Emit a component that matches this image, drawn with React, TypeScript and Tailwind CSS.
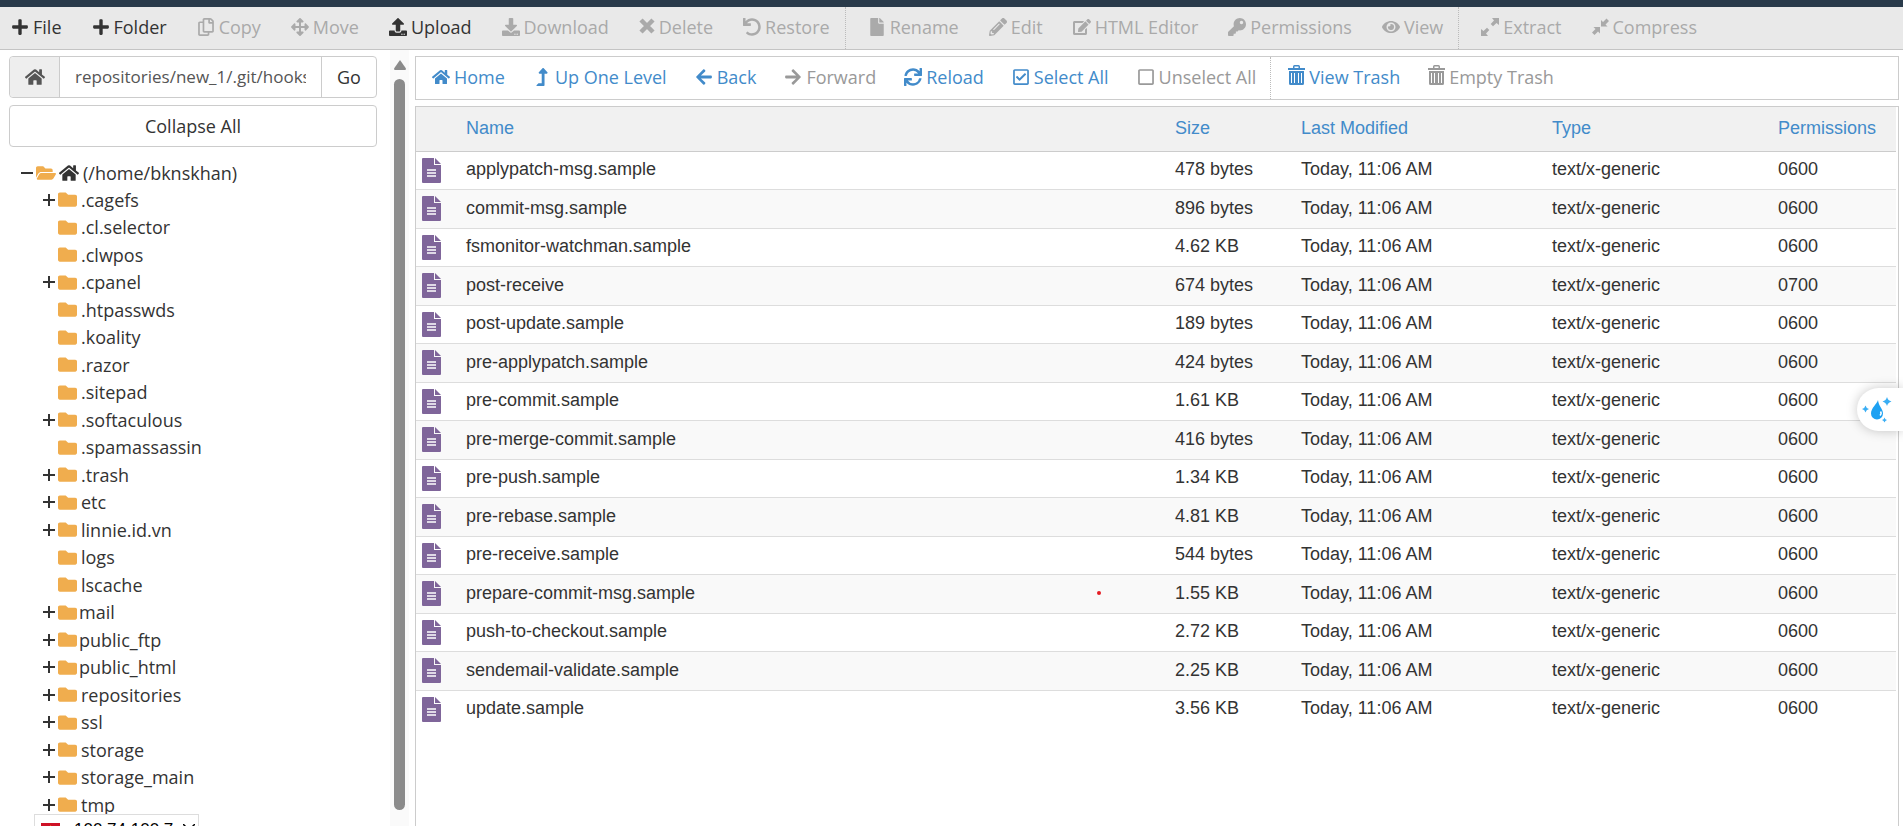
import React, { useState } from 'react';
import type { IconType } from 'react-icons';
import {
  FaArrowLeft,
  FaArrowRight,
  FaArrowsAlt,
  FaDownload,
  FaEdit,
  FaEye,
  FaFile,
  FaFolder,
  FaFolderOpen,
  FaHome,
  FaKey,
  FaLevelUpAlt,
  FaPencilAlt,
  FaPlus,
  FaRegCheckSquare,
  FaRegCopy,
  FaRegSquare,
  FaSync,
  FaUndo,
  FaUpload,
} from 'react-icons/fa';

type IconProps = { className?: string };

interface ToolItem {
  label: string;
  icon: IconType | React.FC<IconProps>;
  disabled?: boolean;
  divider?: boolean;
}

interface TreeNode {
  name: string;
  expandable?: boolean;
  tight?: boolean;
}

interface FileRow {
  name: string;
  size: string;
  perms: string;
}

const TrashIcon: React.FC<IconProps> = () => (
  <svg viewBox="0 0 17 20" className="mb-1 h-5 w-[17px] shrink-0" fill="currentColor">
    <path d="M5 3V1.500A1.500 1.500 0 0 1 6.500 0h4A1.500 1.500 0 0 1 12 1.500V3h5v2H0V3zM6.500 3h4V1.500h-4z" fillRule="evenodd" />
    <path
      d="M1 6h15v12.500a1.500 1.500 0 0 1-1.500 1.500h-12A1.500 1.500 0 0 1 1 18.500zM3 8v10h1V8zM6 8v10h1V8zM10 8v10h1V8zM13 8v10h1V8z"
      fillRule="evenodd"
    />
  </svg>
);

const DeleteIcon: React.FC<IconProps> = ({ className }) => (
  <svg viewBox="0 0 16 18" className={className} fill="none" stroke="currentColor" strokeWidth="4.500">
    <path d="M2 2l12 12M14 2L2 14" />
  </svg>
);

const ExtractIcon: React.FC<IconProps> = ({ className }) => (
  <svg viewBox="0 0 18 18" className={className} fill="currentColor">
    <path d="M11 0h7v7l-2.500-2L12 8.300 9.700 6 13 2.500z" />
    <path d="M7 18H0v-7l2.500 2L6 9.700 8.300 12 5 15.500z" />
  </svg>
);

const CompressIcon: React.FC<IconProps> = ({ className }) => (
  <svg viewBox="0 0 17 18" className={className} fill="currentColor">
    <path d="M9 2v6.500h6.500l-2-2L17 3 14.500.500 11 4z" />
    <path d="M8 15.500V9H1.500l2 2L0 14.500 2.500 17 6 13.500z" />
  </svg>
);

const FileIcon: React.FC<IconProps> = ({ className }) => (
  <svg viewBox="0 0 19 25" className={className}>
    <path d="M1 0h11v7h7v17a1 1 0 0 1-1 1H1a1 1 0 0 1-1-1V1a1 1 0 0 1 1-1z" fill="#7f659a" />
    <path d="M13 0l6 6h-6z" fill="#7f659a" />
    <path d="M5 12h9M5 15h9M5 18h9" stroke="#fff" strokeWidth="1.300" />
  </svg>
);

const toolbar: ToolItem[] = [
  { label: 'File', icon: FaPlus },
  { label: 'Folder', icon: FaPlus },
  { label: 'Copy', icon: FaRegCopy, disabled: true },
  { label: 'Move', icon: FaArrowsAlt, disabled: true },
  { label: 'Upload', icon: FaUpload },
  { label: 'Download', icon: FaDownload, disabled: true },
  { label: 'Delete', icon: DeleteIcon, disabled: true },
  { label: 'Restore', icon: FaUndo, disabled: true },
  { label: 'Rename', icon: FaFile, disabled: true, divider: true },
  { label: 'Edit', icon: FaPencilAlt, disabled: true },
  { label: 'HTML Editor', icon: FaEdit, disabled: true },
  { label: 'Permissions', icon: FaKey, disabled: true },
  { label: 'View', icon: FaEye, disabled: true },
  { label: 'Extract', icon: ExtractIcon, disabled: true, divider: true },
  { label: 'Compress', icon: CompressIcon, disabled: true },
];

const navItems: ToolItem[] = [
  { label: 'Home', icon: FaHome },
  { label: 'Up One Level', icon: FaLevelUpAlt },
  { label: 'Back', icon: FaArrowLeft },
  { label: 'Forward', icon: FaArrowRight, disabled: true },
  { label: 'Reload', icon: FaSync },
  { label: 'Select All', icon: FaRegCheckSquare },
  { label: 'Unselect All', icon: FaRegSquare, disabled: true },
  { label: 'View Trash', icon: TrashIcon, divider: true },
  { label: 'Empty Trash', icon: TrashIcon, disabled: true },
];

const tree: TreeNode[] = [
  { name: '.cagefs', expandable: true },
  { name: '.cl.selector' },
  { name: '.clwpos' },
  { name: '.cpanel', expandable: true },
  { name: '.htpasswds' },
  { name: '.koality' },
  { name: '.razor' },
  { name: '.sitepad' },
  { name: '.softaculous', expandable: true },
  { name: '.spamassassin' },
  { name: '.trash', expandable: true },
  { name: 'etc', expandable: true },
  { name: 'linnie.id.vn', expandable: true },
  { name: 'logs' },
  { name: 'lscache' },
  { name: 'mail', expandable: true, tight: true },
  { name: 'public_ftp', expandable: true, tight: true },
  { name: 'public_html', expandable: true, tight: true },
  { name: 'repositories', expandable: true },
  { name: 'ssl', expandable: true },
  { name: 'storage', expandable: true },
  { name: 'storage_main', expandable: true },
  { name: 'tmp', expandable: true },
];

const files: FileRow[] = [
  { name: 'applypatch-msg.sample', size: '478 bytes', perms: '0600' },
  { name: 'commit-msg.sample', size: '896 bytes', perms: '0600' },
  { name: 'fsmonitor-watchman.sample', size: '4.62 KB', perms: '0600' },
  { name: 'post-receive', size: '674 bytes', perms: '0700' },
  { name: 'post-update.sample', size: '189 bytes', perms: '0600' },
  { name: 'pre-applypatch.sample', size: '424 bytes', perms: '0600' },
  { name: 'pre-commit.sample', size: '1.61 KB', perms: '0600' },
  { name: 'pre-merge-commit.sample', size: '416 bytes', perms: '0600' },
  { name: 'pre-push.sample', size: '1.34 KB', perms: '0600' },
  { name: 'pre-rebase.sample', size: '4.81 KB', perms: '0600' },
  { name: 'pre-receive.sample', size: '544 bytes', perms: '0600' },
  { name: 'prepare-commit-msg.sample', size: '1.55 KB', perms: '0600' },
  { name: 'push-to-checkout.sample', size: '2.72 KB', perms: '0600' },
  { name: 'sendemail-validate.sample', size: '2.25 KB', perms: '0600' },
  { name: 'update.sample', size: '3.56 KB', perms: '0600' },
];

const Toolbar: React.FC = () => (
  <div className="flex h-[43px] shrink-0 border-b border-[#c4c4c4] bg-[#e9e9e9] pr-4">
    {toolbar.map(({ label, icon: Icon, disabled, divider }) => (
      <button
        key={label}
        type="button"
        disabled={disabled}
        className={`flex items-center gap-1 whitespace-nowrap pb-[2px] first:pl-[11px] ${
          divider ? 'border-l border-dotted border-[#bbb] pl-[22px] pr-[15px]' : 'px-[15px]'
        } ${disabled ? 'text-[#aaa]' : 'text-[#333]'}`}
      >
        <Icon className="h-[18px] w-auto shrink-0" />
        {label}
      </button>
    ))}
  </div>
);

const NavBar: React.FC = () => (
  <nav className="flex h-11 shrink-0 border border-[#ccc] bg-white">
    {navItems.map(({ label, icon: Icon, disabled, divider }) => (
      <button
        key={label}
        type="button"
        disabled={disabled}
        className={`flex items-center gap-1 whitespace-nowrap pb-[2px] first:pl-4 ${
          divider ? 'border-l border-dotted border-[#bbb] pl-[17px] pr-[14px]' : 'px-[14px]'
        } ${disabled ? 'text-[#999]' : 'text-[#428bca]'}`}
      >
        <Icon className="h-[18px] w-auto shrink-0" />
        {label}
      </button>
    ))}
  </nav>
);

const Sidebar: React.FC = () => {
  const [path, setPath] = useState('repositories/new_1/.git/hooks');

  return (
    <aside className="w-[377px] shrink-0 pl-[9px] pt-[6px]">
      <form className="flex h-[42px] rounded border border-[#ccc]" onSubmit={(e) => e.preventDefault()}>
        <label htmlFor="path" aria-label="Path" className="flex w-[49px] items-center justify-center rounded-l bg-[#eee] text-[#555]">
          <FaHome className="size-5" />
        </label>
        <input
          id="path"
          value={path}
          onChange={(e) => setPath(e.target.value)}
          className="min-w-0 flex-1 border-x border-[#ccc] px-[15px] text-[17px] text-[#555] outline-none"
        />
        <button type="submit" className="w-[54px] text-[#333]">
          Go
        </button>
      </form>
      <button type="button" className="mt-[7px] h-[42px] w-full rounded-sm border border-[#ccc] text-[#333]">
        Collapse All
      </button>

      <ul className="mt-3">
        <li className="flex h-[27px] items-center pl-3">
          <span className="h-[2px] w-3 bg-[#333]" />
          <FaFolderOpen className="ml-[3px] size-5 text-[#f0ad4e]" />
          <FaHome className="ml-[3px] size-5" />
          <span className="ml-1">(/home/bknskhan)</span>
        </li>
        {tree.map((node) => (
          <li key={node.name} className="flex h-[27px] items-center pl-[34px] odd:h-7">
            <span className="flex w-[15px] shrink-0">
              {node.expandable && (
                <svg viewBox="0 0 12 12" className="size-3" stroke="#333" strokeWidth="2">
                  <path d="M0 6h12M6 0v12" />
                </svg>
              )}
            </span>
            <FaFolder className="size-[19px] shrink-0 text-[#f0ad4e]" />
            <span className={node.tight ? 'ml-[2px]' : 'ml-1'}>{node.name}</span>
          </li>
        ))}
      </ul>
    </aside>
  );
};

const FileTable: React.FC = () => (
  <div className="mt-[6px] flex-1 border border-b-0 border-[#ccc] pr-[2px] font-['Liberation_Sans',Arial,sans-serif]">
    <table className="w-full table-fixed border-collapse text-left">
      <colgroup>
        <col className="w-10" />
        <col />
        <col className="w-[126px]" />
        <col className="w-[251px]" />
        <col className="w-[226px]" />
        <col className="w-[128px]" />
      </colgroup>
      <thead>
        <tr className="h-11 border-b border-[#ccc] bg-[#f1f1f1] text-[#428bca]">
          <th aria-label="Icon" />
          <th className="px-[10px] pb-[2px] font-normal">Name</th>
          <th className="px-[10px] pb-[2px] font-normal">Size</th>
          <th className="px-[10px] pb-[2px] font-normal">Last Modified</th>
          <th className="px-[10px] pb-[2px] font-normal">Type</th>
          <th className="px-[10px] pb-[2px] font-normal">Permissions</th>
        </tr>
      </thead>
      <tbody>
        {files.map((file) => (
          <tr key={file.name} className="h-[38px] border-b border-[#ddd] last:border-b-0 even:h-[39px] even:bg-[#f9f9f9]">
            <td className="pl-[6px]">
              <FileIcon className="h-[25px] w-[19px]" />
            </td>
            <td className="px-[10px] pb-[2px]">{file.name}</td>
            <td className="px-[10px] pb-[2px]">{file.size}</td>
            <td className="px-[10px] pb-[2px]">Today, 11:06 AM</td>
            <td className="px-[10px] pb-[2px]">text/x-generic</td>
            <td className="px-[10px] pb-[2px]">{file.perms}</td>
          </tr>
        ))}
      </tbody>
    </table>
  </div>
);

export default function App() {
  return (
    <div className="relative flex h-screen flex-col overflow-hidden bg-white font-['Open_Sans',sans-serif] text-[18px] leading-6 text-[#333]">
      <div className="h-[7px] shrink-0 bg-[#293a4a]" />
      <Toolbar />
      <div className="flex min-h-0 flex-1">
        <Sidebar />
        {/* scroll track */}
        <div className="ml-[13px] flex w-[19px] shrink-0 flex-col items-center bg-[#fafafa] pb-4 pt-[10px]">
          <svg viewBox="0 0 12 10" className="h-[10px] w-3" fill="#8b8b8b">
            <path d="M6 0l6 8.500q0 1.500-1 1.500H1Q0 10 0 8.500z" />
          </svg>
          <div className="mt-[9px] w-[11px] flex-1 rounded-full bg-[#8b8b8b]" />
        </div>
        <main className="ml-[6px] mr-1 flex min-w-0 flex-1 flex-col pt-[6px]">
          <NavBar />
          <FileTable />
        </main>
      </div>

      <span className="absolute left-[1097px] top-[591px] size-1 rounded-full bg-[#e51c23]" />

      {/* floating assistant tab */}
      <button
        type="button"
        aria-label="Assistant"
        className="absolute right-0 top-[388px] h-[43px] w-[46px] rounded-l-full bg-white pl-[5px] shadow-[0_0_12px_rgba(0,0,0,0.22)]"
      >
        <svg viewBox="0 0 30 28" className="h-7 w-[30px]" fill="#1da1f2">
          <path d="M16 4c-1 4-7 8-7 13.500a6 6 0 0 0 12 0C21 13 16.500 10 16 4z" />
          <path
            d="M25 1q.8 3.500 4.500 4.500-3.700 1-4.500 4.500-.8-3.500-4.500-4.500Q24.200 4.500 25 1zM3.500 9.500q.6 2.700 3.500 3.500-2.900.8-3.500 3.500Q2.900 13.800 0 13q2.900-.8 3.500-3.500zM22.500 21.500q.5 2 2.500 2.500-2 .5-2.500 2.500Q22 24.500 20 24q2-.5 2.500-2.500z"
            fill="#3aaef4"
          />
          <path d="M18.500 15.500q1.500 2-.5 4" fill="none" stroke="#fff" strokeWidth="1.500" />
        </svg>
      </button>

      {/* address popup running off the bottom edge */}
      <div className="absolute left-[34px] top-[814px] flex w-[165px] items-center border border-[#ddd] bg-white px-[6px] pt-[3px] font-['Liberation_Sans',Arial,sans-serif] text-[17px] text-black">
        <svg viewBox="0 0 19 14" className="h-4 w-[19px] shrink-0">
          <path d="M0 0h19v14H0z" fill="#ce1126" />
          <path d="M9.500 2l1.200 3.600h3.800l-3.100 2.300 1.200 3.600-3.100-2.200-3.100 2.200 1.200-3.600-3.100-2.300h3.800z" fill="#ffdd00" />
        </svg>
        <span className="ml-[14px]">100.74.100.7</span>
        <svg viewBox="0 0 12 12" className="ml-[10px] size-3 shrink-0" stroke="currentColor" strokeWidth="1.500">
          <path d="M0 0l12 12M12 0L0 12" />
        </svg>
      </div>
    </div>
  );
}
